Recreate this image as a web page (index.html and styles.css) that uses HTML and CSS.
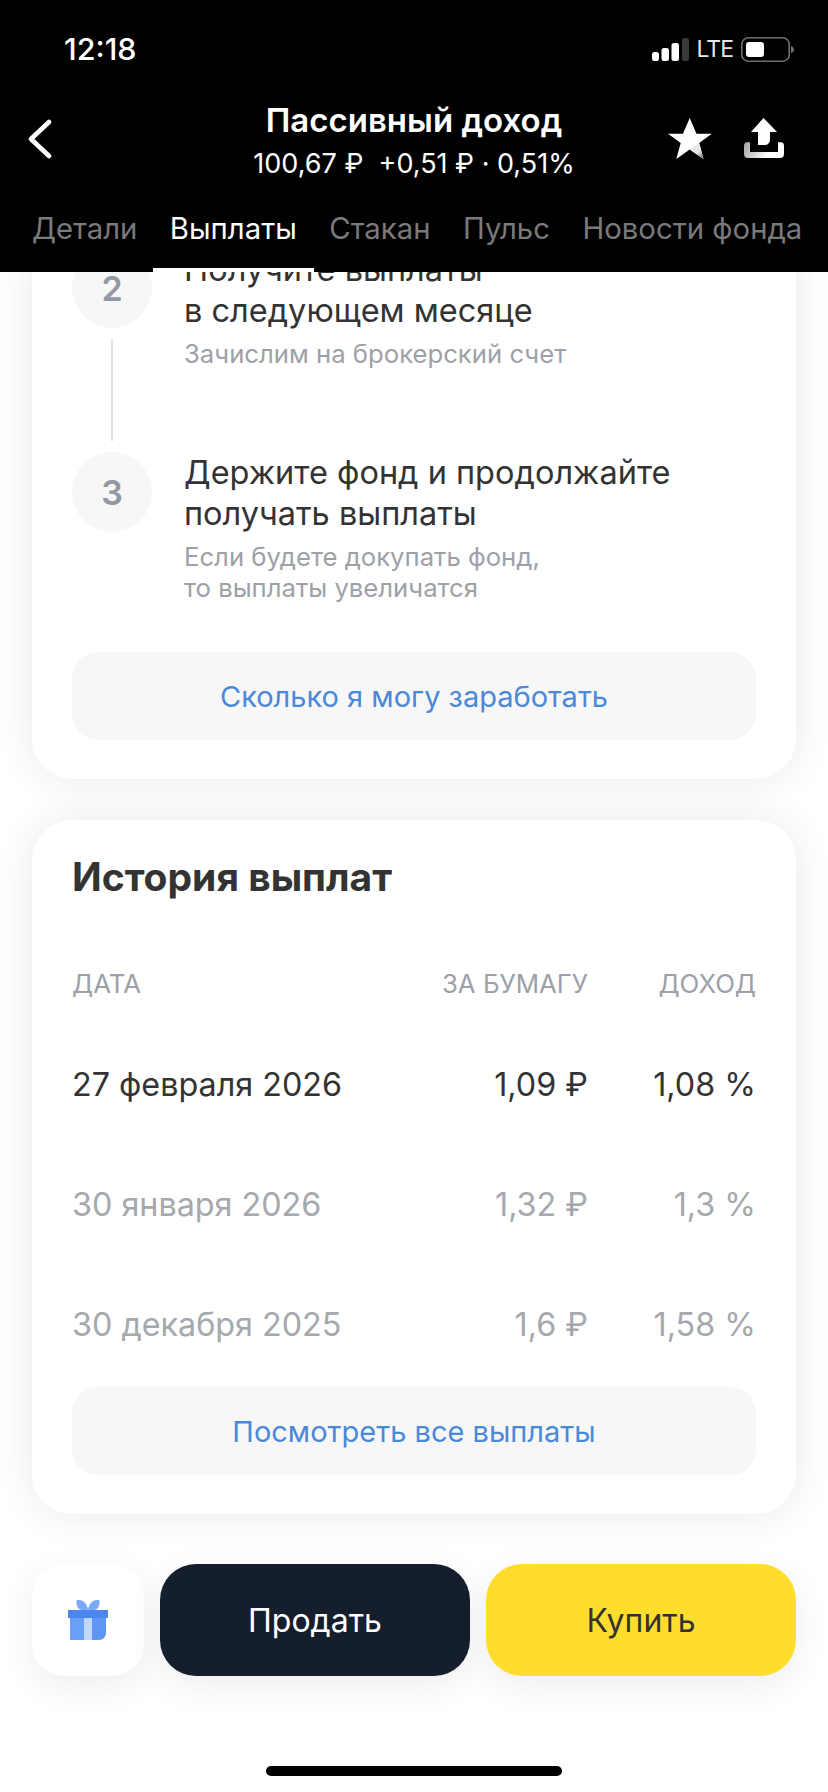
FILE: index.html
```html
<!DOCTYPE html>
<html lang="ru">
<head>
  <meta charset="UTF-8">
  <meta name="viewport" content="width=device-width, initial-scale=1.0">
  <title>Пассивный доход</title>
  <link rel="stylesheet" href="styles.css">
</head>
<body>
  <div class="screen">

    <header class="top">
      <div class="status">
        <span class="clock">12:18</span>
        <div class="status-right">
          <svg class="signal" width="37" height="23" viewBox="0 0 37 23">
            <rect x="0" y="14" width="7" height="9" rx="2.500" fill="#fff"/>
            <rect x="9.500" y="10" width="7.500" height="13" rx="2.500" fill="#fff"/>
            <rect x="19.500" y="5" width="7.500" height="18" rx="2.500" fill="#fff"/>
            <rect x="30" y="0" width="7" height="23" rx="2.500" fill="#3a3a3a"/>
          </svg>
          <span class="lte">LTE</span>
          <svg class="battery" width="53" height="25" viewBox="0 0 53 25">
            <rect x="0.800" y="0.800" width="47.400" height="23.400" rx="6.500" fill="none" stroke="#6e6e6e" stroke-width="1.600"/>
            <rect x="5" y="5" width="18" height="15" rx="3" fill="#fff"/>
            <path d="M50 9c2 .6 3 2 3 3.500s-1 2.900-3 3.500z" fill="#6e6e6e"/>
          </svg>
        </div>
      </div>

      <div class="navbar">
        <svg class="back" width="24" height="40" viewBox="0 0 24 40">
          <path d="M21 3L3 20l18 17" fill="none" stroke="#fff" stroke-width="4.600" stroke-linecap="round" stroke-linejoin="round"/>
        </svg>
        <div class="fund">
          <div class="fund-name">Пассивный доход</div>
          <div class="fund-price">100,67 ₽&nbsp;&nbsp;+0,51 ₽ · 0,51%</div>
        </div>
        <div class="nav-icons">
          <svg width="44" height="41" viewBox="0 0 44 41">
            <defs>
              <linearGradient id="starFade" x1="0.55" y1="0.62" x2="0.85" y2="0.95">
                <stop offset="0" stop-color="#e8e8e8"/>
                <stop offset="1" stop-color="#808080"/>
              </linearGradient>
            </defs>
            <path d="M21.700 0l6.800 15.700h15.300L31.200 25 35.500 41 21.700 31.500 8.300 41l4.400-16L0 15.700h15z" fill="#fff"/>
            <path d="M31.200 25L35.500 41 21.700 31.500z" fill="url(#starFade)"/>
          </svg>
          <svg width="40" height="40" viewBox="0 0 40 40">
            <defs>
              <linearGradient id="trayFade" x1="0" y1="0.3" x2="1" y2="0.5">
                <stop offset="0" stop-color="#a8a8a8"/>
                <stop offset="0.65" stop-color="#fff"/>
              </linearGradient>
            </defs>
            <path d="M0 28c0-2 1-3.700 3-3.700h3v9.700h28v-9.700h3c2 0 3 1.700 3 3.700v8c0 2.500-1.500 4-4 4H4c-2.500 0-4-1.500-4-4z" fill="url(#trayFade)"/>
            <path d="M19.500 0L33 14h-7v7c0 4-2 6-6 6h-6V14H7z" fill="#fff"/>
          </svg>
        </div>
      </div>

      <nav class="tabs">
        <span class="tab">Детали</span>
        <span class="tab tab-active">Выплаты</span>
        <span class="tab">Стакан</span>
        <span class="tab">Пульс</span>
        <span class="tab">Новости фонда</span>
      </nav>
    </header>

    <main class="content">
      <section class="card card-steps">
        <div class="step">
          <div class="step-side">
            <div class="step-num">2</div>
            <div class="step-line"></div>
          </div>
          <div class="step-body">
            <div class="step-title">Получите выплаты<br>в следующем месяце</div>
            <div class="step-note">Зачислим на брокерский счет</div>
          </div>
        </div>
        <div class="step">
          <div class="step-side">
            <div class="step-num">3</div>
          </div>
          <div class="step-body step-body-last">
            <div class="step-title">Держите фонд и продолжайте<br>получать выплаты</div>
            <div class="step-note">Если будете докупать фонд,<br>то выплаты увеличатся</div>
          </div>
        </div>
        <button class="soft-btn">Сколько я могу заработать</button>
      </section>

      <section class="card card-history">
        <h2>История выплат</h2>
        <table class="payouts">
          <thead>
            <tr>
              <th class="col-date">ДАТА</th>
              <th class="col-paper num">ЗА БУМАГУ</th>
              <th class="col-income num">ДОХОД</th>
            </tr>
          </thead>
          <tbody>
            <tr class="upcoming">
              <td>27 февраля 2026</td>
              <td class="num">1,09 ₽</td>
              <td class="num">1,08 %</td>
            </tr>
            <tr>
              <td>30 января 2026</td>
              <td class="num">1,32 ₽</td>
              <td class="num">1,3 %</td>
            </tr>
            <tr>
              <td>30 декабря 2025</td>
              <td class="num">1,6 ₽</td>
              <td class="num">1,58 %</td>
            </tr>
          </tbody>
        </table>
        <button class="soft-btn">Посмотреть все выплаты</button>
      </section>

      <div class="actions">
        <button class="gift">
          <svg width="40" height="40" viewBox="0 0 40 40">
            <path d="M8.500 0h2.500c4.500 0 8.500 4 9 10h-6c-3 0-5.500-3-5.500-7z" fill="#7ba7f7"/>
            <path d="M31.500 0H29c-4.500 0-8.500 4-9 10h6c3 0 5.500-3 5.500-7z" fill="#7ba7f7"/>
            <rect x="0" y="10" width="40" height="8" fill="#4a86ee"/>
            <rect x="2" y="18" width="14" height="22" fill="#6a9ff9"/>
            <path d="M24 18h14v15c0 4-3 7-7 7h-7z" fill="#5f95f3"/>
            <rect x="16" y="18" width="8" height="22" fill="#c0d8f8"/>
          </svg>
        </button>
        <button class="action action-sell">Продать</button>
        <button class="action action-buy">Купить</button>
      </div>
    </main>

    <div class="home-bar"></div>
  </div>
</body>
</html>
```

FILE: styles.css
```css
* {
  box-sizing: border-box;
}

body {
  margin: 0;
  font-family: Inter, "Noto Sans", sans-serif;
  background: #fff;
}

button {
  font-family: inherit;
  border: 0;
  cursor: pointer;
}

.screen {
  width: 828px;
  height: 1792px;
  display: flex;
  flex-direction: column;
  overflow: hidden;
  position: relative;
  background: #fff;
}

/* header */
.top {
  height: 272px;
  flex-shrink: 0;
  background: #000;
  color: #fff;
  position: relative;
  z-index: 2;
}

.status {
  height: 100px;
  padding: 28px 34px 0 64px;
  display: flex;
  justify-content: space-between;
  align-items: flex-start;
}

.clock {
  font-size: 30.500px;
  font-weight: 500;
  line-height: 42px;
}

.status-right {
  display: flex;
  align-items: center;
  gap: 8px;
  padding-top: 9px;
}

.lte {
  font-size: 23px;
  letter-spacing: -1px;
  color: #e6e6e6;
  line-height: 25px;
}

.navbar {
  height: 108px;
  position: relative;
  display: flex;
  justify-content: center;
}

.back {
  position: absolute;
  left: 28px;
  top: 19px;
}

.fund {
  text-align: center;
}

.fund-name {
  font-size: 33px;
  font-weight: 600;
  line-height: 40px;
}

.fund-price {
  font-size: 27px;
  line-height: 48px;
}

.nav-icons {
  position: absolute;
  right: 44px;
  top: 18px;
  display: flex;
  gap: 32px;
}

.tabs {
  height: 64px;
  display: flex;
  padding-left: 32px;
  gap: 32.500px;
}

.tab {
  font-size: 29.300px;
  line-height: 42px;
  color: #7a7a7a;
  white-space: nowrap;
}

.tab-active {
  color: #fff;
  position: relative;
}

.tab-active::after {
  content: "";
  position: absolute;
  left: -17px;
  right: -17px;
  top: 60px;
  height: 4px;
  background: #fff;
}

/* cards */
.content {
  flex: 1;
  padding: 0 32px;
  overflow: hidden;
  display: flex;
  flex-direction: column;
}

.card {
  background: #fff;
  border-radius: 40px;
  padding: 0 40px;
  box-shadow: 0 0 40px rgba(0, 0, 0, 0.09);
  flex-shrink: 0;
}

.card-steps {
  margin-top: -24px;
  height: 531px;
  border-top-left-radius: 0;
  border-top-right-radius: 0;
}

.step {
  display: flex;
  gap: 32px;
}

.step-side {
  width: 80px;
  flex-shrink: 0;
  display: flex;
  flex-direction: column;
  align-items: center;
}

.step-num {
  width: 80px;
  height: 80px;
  border-radius: 50%;
  background: #f7f7f8;
  color: #9299a2;
  font-size: 34px;
  font-weight: 600;
  display: flex;
  align-items: center;
  justify-content: center;
}

.step-line {
  width: 2px;
  height: 102px;
  margin: 11px 0;
  background: #dddfe1;
}

.step-body {
  height: 204px;
  padding-top: 1px;
}

.step-body-last {
  height: 200px;
  padding-top: 0;
}

.step-title {
  font-size: 32.500px;
  line-height: 41px;
  color: #333;
}

.step-note {
  margin-top: 7px;
  font-size: 25.700px;
  line-height: 31px;
  color: #9da1a7;
}

.soft-btn {
  display: block;
  width: 100%;
  height: 88px;
  border-radius: 26px;
  background: #f7f7f8;
  color: #4a88d8;
  font-size: 29px;
}

.card-history {
  margin-top: 41px;
  height: 694px;
}

.card-history h2 {
  margin: 0;
  padding-top: 32px;
  font-size: 39px;
  line-height: 50px;
  font-weight: 700;
  color: #333;
}

.payouts {
  width: 100%;
  border-collapse: collapse;
  table-layout: fixed;
  margin: 41px 0 3px;
}

.col-paper {
  width: 200px;
}

.col-income {
  width: 168px;
}

.payouts th {
  font-size: 25.800px;
  font-weight: 400;
  color: #9da1a7;
  text-align: left;
  height: 81px;
  padding: 0;
  white-space: nowrap;
}

.payouts td {
  font-size: 32.300px;
  color: #a5a8ac;
  padding: 0;
  height: 120px;
}

.payouts .num {
  text-align: right;
}

.payouts .upcoming td {
  color: #333;
}

/* bottom actions */
.actions {
  margin-top: 50px;
  display: flex;
  gap: 16px;
}

.gift {
  width: 112px;
  height: 112px;
  border-radius: 32px;
  background: #fff;
  box-shadow: 0 10px 36px rgba(0, 0, 0, 0.07);
  display: flex;
  align-items: center;
  justify-content: center;
  padding: 0;
  flex-shrink: 0;
}

.action {
  flex: 1;
  height: 112px;
  border-radius: 36px;
  font-size: 32px;
  box-shadow: 0 10px 36px rgba(0, 0, 0, 0.07);
}

.action-sell {
  background: #151e2c;
  color: #fff;
}

.action-buy {
  background: #ffdd2d;
  color: #333;
}

.home-bar {
  position: absolute;
  left: 266px;
  bottom: 16px;
  width: 296px;
  height: 10px;
  border-radius: 5px;
  background: #000;
}
```
